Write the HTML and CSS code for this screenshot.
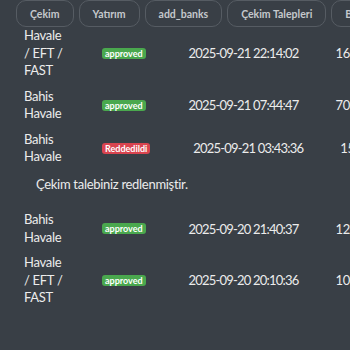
FILE: index.html
```html
<!DOCTYPE html>
<html lang="tr">
<head>
    <meta charset="UTF-8">
    <meta name="viewport" content="width=device-width, initial-scale=1.0">
    <title>Çekim Talepleri</title>
    <link rel="stylesheet" href="styles.css">
</head>
<body>

    <!-- Tabs -->
    <div class="tabs">
        <button class="tab">Çekim</button>
        <button class="tab">Yatırım</button>
        <button class="tab">add_banks</button>
        <button class="tab">Çekim Talepleri</button>
        <button class="tab">Bankalar</button>
    </div>

    <!-- Request list -->
    <div class="requests">
        <div class="row">
            <div class="method">Havale / EFT / FAST</div>
            <span class="badge approved">approved</span>
            <div class="date">2025-09-21 22:14:02</div>
            <div class="amount">1600</div>
        </div>

        <div class="row">
            <div class="method">Bahis Havale</div>
            <span class="badge approved">approved</span>
            <div class="date">2025-09-21 07:44:47</div>
            <div class="amount">700</div>
        </div>

        <div class="row">
            <div class="method">Bahis Havale</div>
            <span class="badge rejected">Reddedildi</span>
            <div class="date">2025-09-21 03:43:36</div>
            <div class="amount">1500</div>
        </div>
        <div class="note">Çekim talebiniz redlenmiştir.</div>

        <div class="row">
            <div class="method">Bahis Havale</div>
            <span class="badge approved">approved</span>
            <div class="date">2025-09-20 21:40:37</div>
            <div class="amount">1200</div>
        </div>

        <div class="row">
            <div class="method">Havale / EFT / FAST</div>
            <span class="badge approved">approved</span>
            <div class="date">2025-09-20 20:10:36</div>
            <div class="amount">1000</div>
        </div>
    </div>

</body>
</html>
```

FILE: styles.css
```css
/* Reset */
* {
    margin: 0;
    padding: 0;
    box-sizing: border-box;
}

body {
    font-family: 'Lato', 'Noto Sans', sans-serif;
    background-color: #393f46;
    color: #ececec;
    font-size: 13px;
    letter-spacing: -0.3px;
    overflow: hidden;
}

/* Tabs */
.tabs {
    display: flex;
    gap: 5px;
    padding-left: 16px;
    white-space: nowrap;
}

.tab {
    flex-shrink: 0;
    height: 27px;
    padding: 0 13px;
    background: transparent;
    border: 1px solid #565c63;
    border-radius: 10px;
    color: #c5c8cc;
    font-family: inherit;
    font-size: 10.5px;
    font-weight: bold;
    letter-spacing: 0;
}

/* Rows */
.requests {
    display: flex;
    flex-direction: column;
    gap: 8px;
}

.row {
    display: flex;
    align-items: center;
    padding-left: 24px;
    white-space: nowrap;
}

.row > * {
    flex-shrink: 0;
}

.method {
    width: 44px;
    margin-right: 34px;
    white-space: normal;
    line-height: 17.5px;
}

.badge {
    padding: 1px 3px;
    border-radius: 3px;
    color: #fff;
    font-size: 9px;
    font-weight: bold;
    letter-spacing: 0;
    line-height: 9px;
    margin-right: 43px;
}

.approved {
    background-color: #4aa84e;
}

.rejected {
    background-color: #d9444f;
}

.date {
    letter-spacing: -0.8px;
    margin-right: 37px;
}

.note {
    padding: 2px 36px 10px;
    line-height: 17.5px;
}
```
